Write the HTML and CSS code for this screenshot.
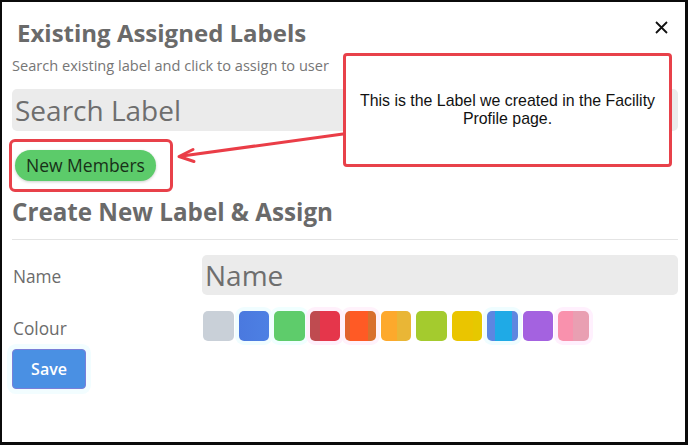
FILE: index.html
```html
<!DOCTYPE html>
<html lang="en">
<head>
<meta charset="utf-8">
<title>Existing Assigned Labels</title>
<link rel="stylesheet" href="styles.css">
</head>
<body>
<div class="frame">
  <button class="close" aria-label="Close">
    <svg width="13" height="13" viewBox="0 0 13 13"><path d="M1 1 L12 12 M12 1 L1 12" stroke="#111" stroke-width="1.8" fill="none"/></svg>
  </button>
  <h1 class="title">Existing Assigned Labels</h1>
  <p class="subtitle">Search existing label and click to assign to user</p>
  <input class="field search" type="text" placeholder="Search Label">
  <div class="highlight">
    <span class="tag">New Members</span>
  </div>
  <h2 class="title title-2">Create New Label &amp; Assign</h2>
  <hr class="rule">
  <div class="form-row">
    <label class="form-label">Name</label>
    <input class="field name" type="text" placeholder="Name">
  </div>
  <div class="form-row colour-row">
    <span class="form-label">Colour</span>
    <div class="swatches">
      <span class="swatch s1"></span>
      <span class="swatch s2"></span>
      <span class="swatch s3"></span>
      <span class="swatch s4"></span>
      <span class="swatch s5"></span>
      <span class="swatch s6"></span>
      <span class="swatch s7"></span>
      <span class="swatch s8"></span>
      <span class="swatch s9"></span>
      <span class="swatch s10"></span>
      <span class="swatch s11"></span>
    </div>
  </div>
  <button class="save">Save</button>

  <div class="callout">This is the Label we created in the Facility Profile page.</div>
  <svg class="arrow" width="688" height="445" viewBox="0 0 688 445">
    <path d="M343 134 L182 156" stroke="#ea3d47" stroke-width="3" fill="none" stroke-linecap="round"/>
    <path d="M193 149.5 L179 156.5 L194 161.5" stroke="#ea3d47" stroke-width="3" fill="none" stroke-linecap="round" stroke-linejoin="round"/>
  </svg>
</div>
</body>
</html>
```

FILE: styles.css
```css
* { box-sizing: border-box; }

html, body {
  margin: 0;
  padding: 0;
  background: #0b0b0b;
}

.frame {
  position: relative;
  width: 688px;
  height: 445px;
  background: #fff;
  border-style: solid;
  border-color: #0b0b0b;
  border-width: 2px 3px 3px 2px;
  padding: 16px 7px 0 10px;
  font-family: "Open Sans", "Liberation Sans", sans-serif;
  color: #6b6b6b;
  overflow: hidden;
}

.close {
  position: absolute;
  top: 19px;
  right: 17px;
  padding: 0;
  border: 0;
  background: none;
  line-height: 0;
}

.title {
  margin: 0;
  padding-left: 5px;
  font-size: 24px;
  line-height: 30px;
  font-weight: 700;
  color: #6a6a6a;
}

.title-2 {
  padding-left: 0;
  margin-top: 5px;
  font-size: 24.2px;
}

.subtitle {
  margin: 7px 0 0;
  font-size: 14.6px;
  line-height: 20px;
  color: #767676;
}

.field {
  display: block;
  width: 100%;
  border: 0;
  border-radius: 5px;
  background: #ebebeb;
  font-family: "Open Sans", "Liberation Sans", sans-serif;
  font-size: 28px;
  padding: 0 3px;
  color: #666;
  outline: none;
}

.field::placeholder { color: #6e6e6e; opacity: 1; }

.search {
  margin-top: 14px;
  height: 42px;
}

.highlight {
  display: inline-block;
  margin: 8px 0 0 -3px;
  padding: 8px 14px 8px 3px;
  border: 3px solid #e8414a;
  border-radius: 6px;
}

.tag {
  display: block;
  height: 31px;
  padding: 0 11px;
  border-radius: 16px;
  background: #5ccb6a;
  color: #183018;
  font-size: 17.5px;
  line-height: 31px;
  box-shadow: 0 1px 3px rgba(0,0,0,0.2);
}

.rule {
  margin: 12px 0 0;
  border: 0;
  border-top: 1px solid #e4e4e4;
}

.form-row {
  display: flex;
  align-items: center;
  margin-top: 15px;
}

.form-label {
  width: 190px;
  flex: none;
  padding-left: 1px;
  font-size: 17.3px;
  color: #6b6b6b;
  position: relative;
  top: 1px;
}

.name {
  flex: 1;
  height: 40px;
}

.colour-row {
  margin-top: 16px;
}

.colour-row .form-label { top: 2px; }

.swatches {
  display: flex;
  gap: 5px;
  padding-left: 1px;
}

.swatch {
  display: block;
  width: 30.5px;
  height: 30px;
  border-radius: 5px;
}

.s1 { background: #c9d0d8; }
.s2 { background: linear-gradient(90deg, #4a79df, #4d80e3); box-shadow: 0 0 0 4px #f0fdff; }
.s3 { background: #5ecc6b; box-shadow: 0 0 0 4px #f0ffff; }
.s4 { background: linear-gradient(90deg, #bf4b50 0 33%, #e5364b 33%); box-shadow: 0 0 0 4px #fff0fb; }
.s5 { background: linear-gradient(90deg, #e0642e 0 15%, #ff5a25 15% 75%, #d8702e 75%); box-shadow: 0 0 0 4px #fff2fb; }
.s6 { background: linear-gradient(90deg, #fda92c 0 55%, #e9b636 55%); }
.s7 { background: #a4cb2e; }
.s8 { background: linear-gradient(90deg, #eac500 0 70%, #e6c800 70%); }
.s9 { background: linear-gradient(90deg, #5d86e1 0 25%, #1faae6 25% 80%, #5e87e0 80%); box-shadow: 0 0 0 4px #effdff; }
.s10 { background: #a462e0; }
.s11 { background: linear-gradient(90deg, #f991ad 0 50%, #e99fb2 50%); box-shadow: 0 0 0 4px #fff0fd; }

.save {
  display: block;
  margin-top: 8px;
  width: 74px;
  height: 40px;
  border: 1px solid #7a7fd8;
  border-radius: 4px;
  background: #4a90e3;
  color: #fff;
  font-family: "Open Sans", "Liberation Sans", sans-serif;
  font-size: 16px;
  font-weight: 600;
  box-shadow: 0 0 0 5px #f2fdff;
}

.callout {
  position: absolute;
  left: 341px;
  top: 51px;
  width: 329px;
  height: 114px;
  display: flex;
  align-items: center;
  justify-content: center;
  text-align: center;
  padding: 0 10px;
  border: 3px solid #e8414a;
  border-radius: 4px;
  background: #fff;
  font-family: "Liberation Sans", Arial, sans-serif;
  font-size: 15.9px;
  line-height: 18px;
  color: #111;
}

.arrow {
  position: absolute;
  left: -2px;
  top: -2px;
  pointer-events: none;
}
```
